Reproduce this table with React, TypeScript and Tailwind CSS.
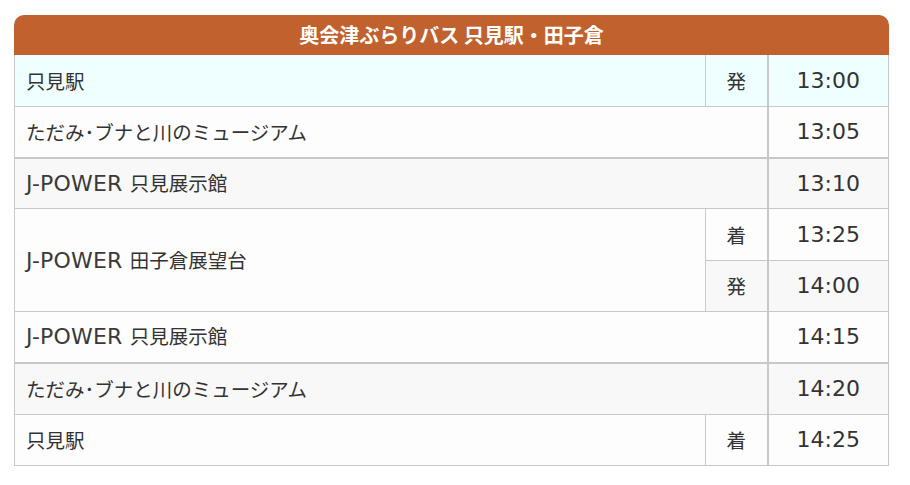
import React from "react";

const cjk = { fontFamily: '"Noto Sans CJK JP", "Noto Sans", sans-serif' };

// latin runs are set in a wider face, as on the original page
function Mixed({ text }: Readonly<{ text: string }>) {
    const parts = text.split(/([\x20-\x7e]+)/).filter((p) => p !== "");
    return (
        <>
            {parts.map((p, i) =>
                /^[\x20-\x7e]+$/.test(p) ? (
                    <span key={i} className="text-[22px] text-[#3a3a3a] tracking-[0.2px] font-['DejaVu_Sans',sans-serif]">
                        {p}
                    </span>
                ) : (
                    <span key={i}>{p}</span>
                )
            )}
        </>
    );
}

export default function App() {
    const cell = "border border-[#c8c8c8] text-[19.5px] text-[#333333] h-[51.3px] p-0";
    const time = `${cell} border-l-2 text-center text-[22px] text-[#3a3a3a] font-['DejaVu_Sans',sans-serif]`;

    return (
        <div className="bg-white w-[910px] h-[485px] pt-[15px] pl-[14px]" style={cjk}>
            <div className="w-[875px]">
                <div className="h-[40px] rounded-t-[10px] bg-[#c0612e] flex items-center justify-center text-white font-bold text-[20px]">
                    奥会津ぶらりバス 只見駅・田子倉
                </div>
                <table className="w-[875px] border-collapse table-fixed">
                    <colgroup>
                        <col className="w-[691px]" />
                        <col className="w-[62px]" />
                        <col />
                    </colgroup>
                    <tbody>
                        <tr className="bg-[#efffff]">
                            <td className={`${cell} border-t-0 pl-[11px]`}>只見駅</td>
                            <td className={`${cell} border-t-0 text-center`}>発</td>
                            <td className={`${time} border-t-0`}>13:00</td>
                        </tr>
                        <tr className="bg-[#fdfdfd]">
                            <td colSpan={2} className={`${cell} border-b-2 pl-[11px]`}>ただみ･ブナと川のミュージアム</td>
                            <td className={`${time} border-b-2`}>13:05</td>
                        </tr>
                        <tr className="bg-[#f8f8f8]">
                            <td colSpan={2} className={`${cell} pl-[11px]`}>
                                <Mixed text="J-POWER 只見展示館" />
                            </td>
                            <td className={time}>13:10</td>
                        </tr>
                        <tr className="bg-[#fdfdfd]">
                            <td rowSpan={2} className={`${cell} pl-[11px] bg-[#fdfdfd]`}>
                                <Mixed text="J-POWER 田子倉展望台" />
                            </td>
                            <td className={`${cell} text-center`}>着</td>
                            <td className={time}>13:25</td>
                        </tr>
                        <tr className="bg-[#f8f8f8]">
                            <td className={`${cell} text-center`}>発</td>
                            <td className={time}>14:00</td>
                        </tr>
                        <tr className="bg-[#fdfdfd]">
                            <td colSpan={2} className={`${cell} border-b-2 pl-[11px]`}>
                                <Mixed text="J-POWER 只見展示館" />
                            </td>
                            <td className={`${time} border-b-2`}>14:15</td>
                        </tr>
                        <tr className="bg-[#f8f8f8]">
                            <td colSpan={2} className={`${cell} pl-[11px]`}>ただみ･ブナと川のミュージアム</td>
                            <td className={time}>14:20</td>
                        </tr>
                        <tr className="bg-[#fdfdfd]">
                            <td className={`${cell} pl-[11px]`}>只見駅</td>
                            <td className={`${cell} text-center`}>着</td>
                            <td className={time}>14:25</td>
                        </tr>
                    </tbody>
                </table>
            </div>
        </div>
    );
}
